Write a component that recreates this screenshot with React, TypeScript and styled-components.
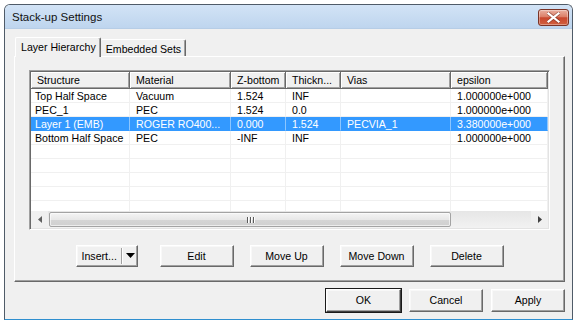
import React from "react";
import styled, { createGlobalStyle, css } from "styled-components";

const Global = createGlobalStyle`
  html, body { margin: 0; padding: 0; background: #ffffff; }
  body { font-family: "Liberation Sans", Arial, sans-serif; font-size: 10.6px; color: #000; }
  * { box-sizing: border-box; }
`;

const Window = styled.div`
  margin: 4px 0 0 4px;
  width: 569px;
  height: 316px;
  display: flex;
  flex-direction: column;
  background: #f0f0f0;
  border: 1px solid #4f5b68;
  border-bottom-color: #2f8fcf;
  border-radius: 6px 6px 0 0;
  overflow: hidden;
`;

const TitleBar = styled.div`
  height: 24px;
  flex: none;
  display: flex;
  align-items: center;
  justify-content: space-between;
  padding: 0 3px 0 7px;
  background: linear-gradient(#d2e3f6, #bed5ee);
  border-bottom: 1px solid #b6cde6;
`;

const TitleText = styled.span`
  font-family: "Liberation Sans", Arial, sans-serif;
  font-size: 11.5px;
  color: #111;
`;

const CloseButton = styled.div`
  width: 31px;
  height: 17px;
  margin-top: 1px;
  border: 1px solid #7a3326;
  border-radius: 3px;
  background: linear-gradient(#eab0a1 0%, #dc7f68 45%, #c9472e 52%, #d1603f 100%);
  box-shadow: inset 0 0 0 1px rgba(255, 255, 255, 0.35);
  display: flex;
  align-items: center;
  justify-content: center;
`;

const Client = styled.div`
  flex: 1;
  display: flex;
  flex-direction: column;
  padding: 8px 7px 7px 9px;
`;

const TabStrip = styled.div`
  display: flex;
  align-items: flex-end;
  height: 20px;
  padding-left: 1px;
  position: relative;
  z-index: 1;
  margin-bottom: -1px;
`;

const Tab = styled.div<{ $active?: boolean }>`
  display: flex;
  align-items: center;
  padding: 0 4px 0 5px;
  background: #f0f0f0;
  border-top: 1px solid #ffffff;
  border-left: 1px solid #ffffff;
  border-right: 1px solid #696969;
  box-shadow: inset -1px 0 #a0a0a0;
  border-radius: 2px 2px 0 0;
  ${(p) =>
    p.$active
      ? css`
          height: 20px;
          padding-bottom: 2px;
        `
      : css`
          height: 17px;
          margin-bottom: 1px;
          border-left: none;
          padding-top: 1px;
        `}
`;

const Panel = styled.div`
  height: 226px;
  display: flex;
  flex-direction: column;
  padding: 13px 14px 14px 14px;
  border-top: 1px solid #ffffff;
  border-left: 1px solid #ffffff;
  border-right: 1px solid #696969;
  border-bottom: 1px solid #696969;
  box-shadow: inset -1px -1px #a0a0a0;
`;

const ListBox = styled.div`
  width: 521px;
  height: 160px;
  display: flex;
  flex-direction: column;
  background: #ffffff;
  border-style: solid;
  border-width: 1px;
  border-color: #a0a0a0 #ffffff #ffffff #a0a0a0;
  box-shadow: inset 1px 1px #696969, inset -1px -1px #e3e3e3;
  padding: 1px;
  overflow: hidden;
`;

const Grid = styled.div`
  flex: 1;
  overflow: hidden;
  display: flex;
  flex-direction: column;
`;

const HeaderRow = styled.div`
  display: flex;
  height: 17px;
  flex: none;
  background: #f0f0f0;
`;

const HeaderCell = styled.div<{ $w?: number }>`
  ${(p) => (p.$w ? `width: ${p.$w}px; flex: none;` : `flex: 1;`)}
  height: 17px;
  display: flex;
  align-items: center;
  padding-left: 6px;
  white-space: nowrap;
  overflow: hidden;
  border-right: 1px solid #696969;
  border-bottom: 1px solid #696969;
  box-shadow: inset 1px 1px #ffffff, inset -1px -1px #a0a0a0;
`;

const Row = styled.div<{ $selected?: boolean }>`
  display: flex;
  height: 14px;
  flex: none;
  background: ${(p) => (p.$selected ? "#3399ff" : "#ffffff")};
  color: ${(p) => (p.$selected ? "#ffffff" : "#000000")};
`;

const Cell = styled.div<{ $w?: number; $first?: boolean; $selected?: boolean }>`
  ${(p) => (p.$w ? `width: ${p.$w}px; flex: none;` : `flex: 1;`)}
  height: 14px;
  line-height: 14px;
  padding-left: ${(p) => (p.$first ? 4 : 6)}px;
  white-space: nowrap;
  overflow: hidden;
  border-right: 1px solid ${(p) => (p.$selected ? "#8cc6ff" : "#f0f0f0")};
  border-bottom: 1px solid ${(p) => (p.$selected ? "#3399ff" : "#f0f0f0")};
`;

const HScroll = styled.div`
  height: 17px;
  flex: none;
  display: flex;
  background: linear-gradient(#e6e6e6, #f2f2f2);
`;

const ArrowBtn = styled.div`
  width: 17px;
  height: 17px;
  flex: none;
  display: flex;
  align-items: center;
  justify-content: center;
  background: #f0f0f0;
`;

const Thumb = styled.div`
  width: 402px;
  height: 15px;
  margin: 1px 0 1px 1px;
  border: 1px solid #a3a3a3;
  border-radius: 2px;
  background: linear-gradient(#f4f4f4 0%, #e8e8e8 50%, #d5d5d5 51%, #d0d0d0 100%);
  box-shadow: inset 0 0 0 1px rgba(255, 255, 255, 0.6);
  display: flex;
  align-items: center;
  justify-content: center;
`;

const Track = styled.div`
  flex: 1;
`;

const Grip = styled.div`
  display: flex;
  & > span {
    width: 1px;
    height: 6px;
    background: #5a5a5a;
    box-shadow: 1px 0 #ffffff;
  }
  & > span + span {
    margin-left: 2px;
  }
`;

const ActionRow = styled.div`
  display: flex;
  justify-content: center;
  gap: 16px;
  margin-top: 15px;
`;

const buttonBase = css`
  height: 22px;
  display: flex;
  align-items: center;
  justify-content: center;
  background: #f0f0f0;
  border-top: 1px solid #ffffff;
  border-left: 1px solid #ffffff;
  border-right: 1px solid #696969;
  border-bottom: 1px solid #696969;
  box-shadow: inset -1px -1px #a0a0a0, inset 1px 1px #f8f8f8;
  font-family: "Liberation Sans", Arial, sans-serif;
  font-size: 10.6px;
  color: #000;
  padding: 0 0 1px;
`;

const Button = styled.div<{ $w?: number; $h?: number; $default?: boolean }>`
  ${buttonBase}
  width: ${(p) => p.$w ?? 74}px;
  height: ${(p) => p.$h ?? 22}px;
  ${(p) =>
    p.$default &&
    css`
      outline: 1px solid #1a1a1a;
      outline-offset: 0;
      border-color: #ffffff #404040 #404040 #ffffff;
    `}
`;

const SplitButton = styled.div`
  ${buttonBase}
  width: 62px;
  margin-right: 6px;
  justify-content: flex-start;
  padding-left: 5px;
`;

const SplitSep = styled.span`
  width: 2px;
  height: 16px;
  margin: 0 3px 0 4px;
  border-left: 1px solid #a0a0a0;
  border-right: 1px solid #ffffff;
`;

const Footer = styled.div`
  display: flex;
  justify-content: flex-end;
  gap: 8px;
  margin-top: 7px;
`;

type Col = { title: string; w?: number };
const columns: Col[] = [
  { title: "Structure", w: 99 },
  { title: "Material", w: 101 },
  { title: "Z-bottom", w: 55 },
  { title: "Thickn...", w: 55 },
  { title: "Vias", w: 110 },
  { title: "epsilon" },
];

const rows: string[][] = [
  ["Top Half Space", "Vacuum", "1.524", "INF", "", "1.000000e+000"],
  ["PEC_1", "PEC", "1.524", "0.0", "", "1.000000e+000"],
  ["Layer 1 (EMB)", "ROGER RO400...", "0.000", "1.524", "PECVIA_1", "3.380000e+000"],
  ["Bottom Half Space", "PEC", "-INF", "INF", "", "1.000000e+000"],
  ["", "", "", "", "", ""],
  ["", "", "", "", "", ""],
  ["", "", "", "", "", ""],
  ["", "", "", "", "", ""],
  ["", "", "", "", "", ""],
];

const CloseX = () => (
  <svg width="13" height="11" viewBox="0 0 13 11">
    <path
      d="M1.5 1.5 L11.5 9.5 M11.5 1.5 L1.5 9.5"
      stroke="#6a2a20"
      strokeWidth="3.6"
      strokeLinecap="square"
      opacity="0.55"
    />
    <path
      d="M1.5 1.5 L11.5 9.5 M11.5 1.5 L1.5 9.5"
      stroke="#ffffff"
      strokeWidth="2.2"
      strokeLinecap="square"
    />
  </svg>
);

const TriLeft = () => (
  <svg width="4" height="7" viewBox="0 0 4 7">
    <path d="M4 0 L0 3.5 L4 7 Z" fill="#606060" />
  </svg>
);

const TriRight = () => (
  <svg width="4" height="7" viewBox="0 0 4 7">
    <path d="M0 0 L4 3.5 L0 7 Z" fill="#404040" />
  </svg>
);

const TriDown = () => (
  <svg width="9" height="5" viewBox="0 0 9 5">
    <path d="M0 0 L9 0 L4.5 5 Z" fill="#000" />
  </svg>
);

export default function App() {
  return (
    <>
      <Global />
      <Window>
        <TitleBar>
          <TitleText>Stack-up Settings</TitleText>
          <CloseButton>
            <CloseX />
          </CloseButton>
        </TitleBar>
        <Client>
          <TabStrip>
            <Tab $active>Layer Hierarchy</Tab>
            <Tab>Embedded Sets</Tab>
          </TabStrip>
          <Panel>
            <ListBox>
              <Grid>
                <HeaderRow>
                  {columns.map((c) => (
                    <HeaderCell key={c.title} $w={c.w}>
                      {c.title}
                    </HeaderCell>
                  ))}
                </HeaderRow>
                {rows.map((r, i) => {
                  const sel = i === 2;
                  return (
                    <Row key={i} $selected={sel}>
                      {r.map((v, j) => (
                        <Cell key={j} $w={columns[j].w} $first={j === 0} $selected={sel}>
                          {v}
                        </Cell>
                      ))}
                    </Row>
                  );
                })}
              </Grid>
              <HScroll>
                <ArrowBtn>
                  <TriLeft />
                </ArrowBtn>
                <Thumb>
                  <Grip>
                    <span />
                    <span />
                    <span />
                  </Grip>
                </Thumb>
                <Track />
                <ArrowBtn>
                  <TriRight />
                </ArrowBtn>
              </HScroll>
            </ListBox>
            <ActionRow>
              <SplitButton>
                Insert...
                <SplitSep />
                <TriDown />
              </SplitButton>
              <Button>Edit</Button>
              <Button>Move Up</Button>
              <Button>Move Down</Button>
              <Button>Delete</Button>
            </ActionRow>
          </Panel>
          <Footer>
            <Button $w={75} $h={23} $default>
              OK
            </Button>
            <Button $w={74} $h={23}>
              Cancel
            </Button>
            <Button $w={74} $h={23}>
              Apply
            </Button>
          </Footer>
        </Client>
      </Window>
    </>
  );
}
